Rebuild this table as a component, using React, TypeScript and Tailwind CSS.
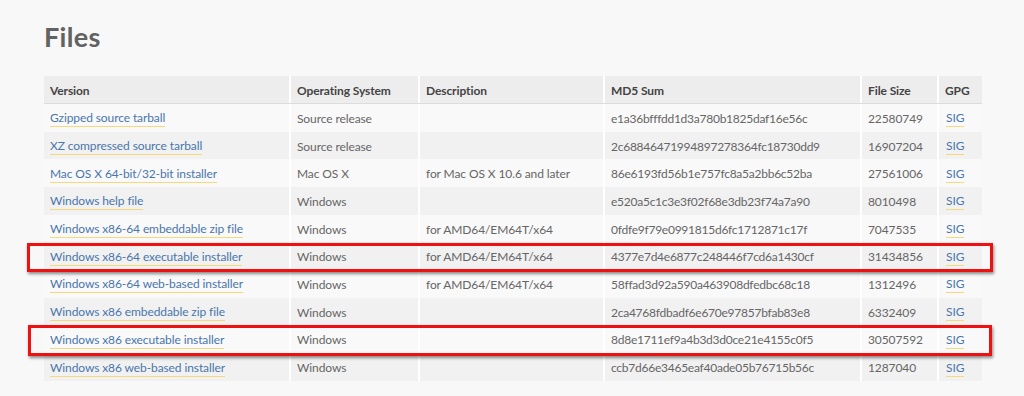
import React from "react";

type Row = {
  version: string;
  os: string;
  desc: string;
  md5: string;
  size: string;
};

const rows: Row[] = [
  { version: "Gzipped source tarball", os: "Source release", desc: "", md5: "e1a36bfffdd1d3a780b1825daf16e56c", size: "22580749" },
  { version: "XZ compressed source tarball", os: "Source release", desc: "", md5: "2c68846471994897278364fc18730dd9", size: "16907204" },
  { version: "Mac OS X 64-bit/32-bit installer", os: "Mac OS X", desc: "for Mac OS X 10.6 and later", md5: "86e6193fd56b1e757fc8a5a2bb6c52ba", size: "27561006" },
  { version: "Windows help file", os: "Windows", desc: "", md5: "e520a5c1c3e3f02f68e3db23f74a7a90", size: "8010498" },
  { version: "Windows x86-64 embeddable zip file", os: "Windows", desc: "for AMD64/EM64T/x64", md5: "0fdfe9f79e0991815d6fc1712871c17f", size: "7047535" },
  { version: "Windows x86-64 executable installer", os: "Windows", desc: "for AMD64/EM64T/x64", md5: "4377e7d4e6877c248446f7cd6a1430cf", size: "31434856" },
  { version: "Windows x86-64 web-based installer", os: "Windows", desc: "for AMD64/EM64T/x64", md5: "58ffad3d92a590a463908dfedbc68c18", size: "1312496" },
  { version: "Windows x86 embeddable zip file", os: "Windows", desc: "", md5: "2ca4768fdbadf6e670e97857bfab83e8", size: "6332409" },
  { version: "Windows x86 executable installer", os: "Windows", desc: "", md5: "8d8e1711ef9a4b3d3d0ce21e4155c0f5", size: "30507592" },
  { version: "Windows x86 web-based installer", os: "Windows", desc: "", md5: "ccb7d66e3465eaf40ade05b76715b56c", size: "1287040" },
];

const headers = ["Version", "Operating System", "Description", "MD5 Sum", "File Size", "GPG"];

function Link({ children }: { children: React.ReactNode }) {
  return (
    <span className="text-[#4a76ab] border-b border-[#f5d87a] leading-[15px] pb-[1px]">
      {children}
    </span>
  );
}

export default function App() {
  return (
    <div
      className="w-[1024px] h-[396px] bg-[#f8f8f8] overflow-hidden"
      style={{ fontFamily: "Lato, 'Noto Sans', sans-serif" }}
    >
      <div className="relative pl-[44px] pt-[20px]">
        <h1 className="text-[27px] font-bold text-[#626262] leading-[34px] tracking-[0.3px]">Files</h1>
        <div className="mt-[22px] w-[938px] text-[12px] tracking-[-0.1px]">
          <div className="grid grid-cols-[245px_129px_185px_257px_77px_45px] h-[28px] bg-[#ededed] border-b border-[#dcdcdc] font-bold text-[#444]">
            {headers.map((h, i) => (
              <div
                key={h}
                className={`flex items-center pt-[2px] pl-[6px] ${i === 0 ? "" : "border-l-2 border-white"}`}
              >
                {h}
              </div>
            ))}
          </div>
          {rows.map((r, idx) => (
            <div
              key={r.md5}
              className={`grid grid-cols-[245px_129px_185px_257px_77px_45px] h-[27.7px] text-[#666] ${
                idx % 2 === 0 ? "bg-[#f9f9f9]" : "bg-[#f1f1f1]"
              }`}
            >
              <div className="flex items-center pt-[2px] pl-[6px]">
                <Link>{r.version}</Link>
              </div>
              <div className="flex items-center pt-[2px] pl-[6px] border-l-2 border-white">{r.os}</div>
              <div className="flex items-center pt-[2px] pl-[6px] border-l-2 border-white">{r.desc}</div>
              <div className="flex items-center pt-[2px] pl-[6px] border-l-2 border-white tracking-[-0.25px]">{r.md5}</div>
              <div className="flex items-center pt-[2px] pl-[6px] border-l-2 border-white">{r.size}</div>
              <div className="flex items-center pt-[2px] pl-[7px] border-l-2 border-white">
                <Link>SIG</Link>
              </div>
            </div>
          ))}
        </div>
        <div className="absolute left-[27px] top-[243px] w-[966px] h-[29px] border-[3px] border-[#ee1111] shadow-[1px_2px_3px_rgba(0,0,0,0.45)]" />
        <div className="absolute left-[28px] top-[325px] w-[964px] h-[31px] border-[3px] border-[#ee1111] shadow-[1px_2px_3px_rgba(0,0,0,0.45)]" />
      </div>
    </div>
  );
}
